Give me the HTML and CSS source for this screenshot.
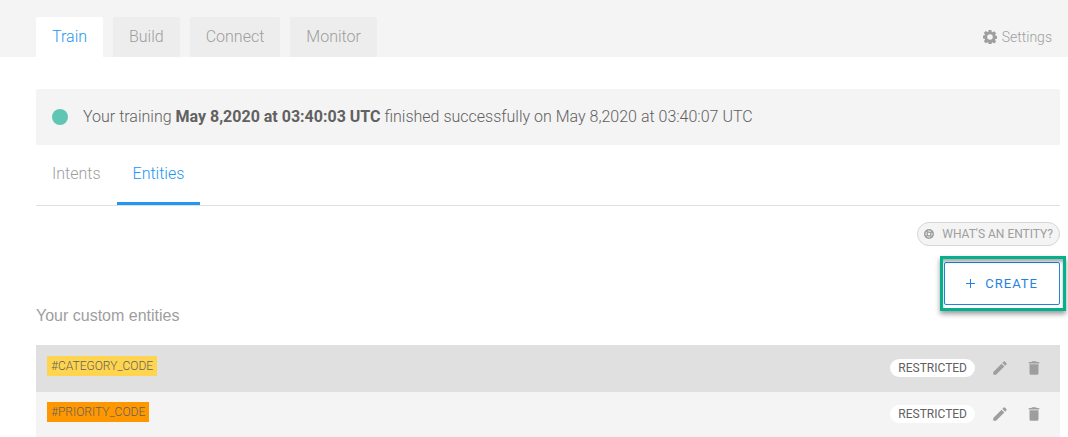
FILE: index.html
```html
<!DOCTYPE html>
<html lang="en">
<head>
<meta charset="utf-8">
<meta name="viewport" content="width=device-width, initial-scale=1">
<title>Entities</title>
<link rel="stylesheet" href="styles.css">
</head>
<body>
<svg class="sprite" aria-hidden="true">
  <symbol id="gear" viewBox="0 0 24 24"><path fill-rule="evenodd" d="M9.600 0h4.800l.6 3.400 1.400.6 2.800-2 3.400 3.400-2 2.800.6 1.400 3.400.6v4.800l-3.400.6-.6 1.400 2 2.800-3.400 3.400-2.800-2-1.400.6-.6 3.400H9.600L9 21.400l-1.400-.6-2.800 2-3.400-3.400 2-2.800-.6-1.400L0 14.600V9.800l2.800-.6.6-1.400-2-2.800 3.400-3.400 2.800 2L9 3.400zM12 7.200a4.800 4.800 0 1 0 0 9.600 4.800 4.800 0 0 0 0-9.600z"/></symbol>
  <symbol id="pencil" viewBox="0 0 24 24"><path d="M3 17.250V21h3.750L17.810 9.940l-3.750-3.750L3 17.250zM20.710 7.040a1 1 0 0 0 0-1.410l-2.340-2.340a1 1 0 0 0-1.410 0l-1.830 1.830 3.750 3.750 1.830-1.830z"/></symbol>
  <symbol id="trash" viewBox="0 0 24 24"><path d="M6 19c0 1.100.9 2 2 2h8c1.100 0 2-.9 2-2V7H6v12zM19 4h-3.500l-1-1h-5l-1 1H5v2h14V4z"/></symbol>
  <symbol id="ring" viewBox="0 0 24 24"><circle cx="12" cy="12" r="12" fill="currentColor"/><circle cx="12" cy="12" r="7.200" fill="none" stroke="#f4f4f4" stroke-width="2.400" stroke-dasharray="7.800 3.510" stroke-dashoffset="3.900"/><circle cx="12" cy="12" r="3" fill="#f4f4f4"/></symbol>
</svg>

<header class="topbar">
  <nav class="tabs" aria-label="Sections">
    <a class="tab tab-active" href="#train" aria-current="page">Train</a>
    <a class="tab" href="#build">Build</a>
    <a class="tab" href="#connect">Connect</a>
    <a class="tab" href="#monitor">Monitor</a>
  </nav>
  <a class="settings" href="#settings"><svg class="icon-gear"><use href="#gear"/></svg>Settings</a>
</header>

<main class="content">
  <p class="status"><span class="status-dot"></span><span>Your training <strong>May 8,2020 at 03:40:03 UTC</strong> finished successfully on May 8,2020 at 03:40:07 UTC</span></p>

  <nav class="subtabs" aria-label="Training">
    <a class="subtab" href="#intents">Intents</a>
    <a class="subtab subtab-active" href="#entities" aria-current="page">Entities</a>
  </nav>

  <div class="actions">
    <button class="help" type="button"><svg class="icon-ring"><use href="#ring"/></svg>WHAT'S AN ENTITY?</button>
    <div class="create-wrap">
      <button class="create" type="button"><svg class="icon-plus" viewBox="0 0 9 9"><path d="M4 0h1v4h4v1H5v4H4V5H0V4h4z"/></svg>CREATE</button>
      <span class="highlight"></span>
    </div>
  </div>

  <h2 class="heading">Your custom entities</h2>

  <ul class="entities">
    <li class="entity entity-hover">
      <span class="tag tag-yellow">#CATEGORY_CODE</span>
      <span class="badge">RESTRICTED</span>
      <button class="icon-button" type="button" aria-label="Edit"><svg class="icon"><use href="#pencil"/></svg></button>
      <button class="icon-button" type="button" aria-label="Delete"><svg class="icon"><use href="#trash"/></svg></button>
    </li>
    <li class="entity">
      <span class="tag tag-orange">#PRIORITY_CODE</span>
      <span class="badge">RESTRICTED</span>
      <button class="icon-button" type="button" aria-label="Edit"><svg class="icon"><use href="#pencil"/></svg></button>
      <button class="icon-button" type="button" aria-label="Delete"><svg class="icon"><use href="#trash"/></svg></button>
    </li>
  </ul>
</main>
</body>
</html>
```
FILE: styles.css
```css
* {
  box-sizing: border-box;
}

body {
  margin: 0;
  background: #fff;
  color: #616161;
  font-family: Roboto, "Liberation Sans", sans-serif;
  font-size: 16px;
  font-weight: 300;
  line-height: 24px;
}

a {
  text-decoration: none;
}

button {
  font-family: inherit;
  cursor: pointer;
}

svg {
  fill: currentColor;
  flex: none;
}

.sprite {
  display: none;
}

.topbar {
  display: flex;
  justify-content: space-between;
  align-items: flex-start;
  padding: 17px 16px 0 36px;
  background: #f4f4f4;
}

.tabs {
  display: flex;
  gap: 10px;
}

.tab {
  padding: 8px 16px;
  border-radius: 2px 2px 0 0;
  background: #ededed;
  color: #9e9e9e;
}

.tab-active {
  background: #fff;
  color: #2196f3;
}

.settings {
  display: flex;
  align-items: center;
  gap: 5px;
  padding: 8px 0;
  color: #9e9e9e;
  font-size: 14px;
}

.icon-gear {
  width: 14px;
  height: 14px;
}

.content {
  padding: 32px 8px 0 36px;
}

.status {
  display: flex;
  align-items: center;
  gap: 15px;
  margin: 0;
  padding: 16px;
  border-radius: 2px;
  background: #f4f4f4;
}

.status-dot {
  width: 16px;
  height: 16px;
  border-radius: 50%;
  background: #5fc6b4;
}

.status strong {
  font-weight: 700;
}

.subtabs {
  display: flex;
  border-bottom: 1px solid #e0e0e0;
}

.subtab {
  padding: 17px 16px 16px;
  border-bottom: 3px solid transparent;
  color: #9e9e9e;
}

.subtab-active {
  border-color: #2196f3;
  color: #2196f3;
}

.actions {
  display: flex;
  flex-direction: column;
  align-items: flex-end;
  gap: 16px;
  padding-top: 16px;
}

.help {
  display: flex;
  align-items: center;
  gap: 8px;
  padding: 0 6px;
  border: 1px solid #d6d6d6;
  border-radius: 12px;
  background: #f4f4f4;
  color: #9e9e9e;
  font-size: 12px;
  font-weight: 400;
  line-height: 22px;
}

.icon-ring {
  width: 10px;
  height: 10px;
}

.create-wrap {
  position: relative;
}

.create {
  display: flex;
  align-items: center;
  gap: 10px;
  padding: 0 21px;
  border: 1px solid #2583e0;
  border-radius: 2px;
  background: #fff;
  color: #2583e0;
  font-size: 13px;
  font-weight: 400;
  letter-spacing: 1px;
  line-height: 41px;
}

.icon-plus {
  width: 9px;
  height: 9px;
}

.highlight {
  position: absolute;
  inset: -6px -6px -6px -4px;
  border: 3px solid #05b08c;
  box-shadow: 0 3px 5px rgba(0, 0, 0, 0.4), inset 0 3px 3px rgba(0, 0, 0, 0.3);
  pointer-events: none;
}

.heading {
  margin: 0 0 18px;
  color: #9e9e9e;
  font-family: "Liberation Sans", Arial, sans-serif;
  font-size: 16px;
  font-weight: 400;
  line-height: 22px;
}

.entities {
  margin: 0;
  padding: 0;
  list-style: none;
}

.entity {
  display: flex;
  align-items: center;
  padding: 10px 9px 11px 11px;
  border-top: 1px solid #e0e0e0;
  background: #f4f4f4;
}

.entity-hover {
  background: #e0e0e0;
}

.tag {
  align-self: flex-start;
  margin-right: auto;
  padding: 0 4px;
  font-size: 12px;
  line-height: 20px;
}

.tag-yellow {
  background: #ffd54f;
}

.tag-orange {
  background: #ff9800;
}

.badge {
  margin-right: 8px;
  padding: 0 8px;
  border-radius: 9px;
  background: #fff;
  font-size: 12px;
  font-weight: 400;
  line-height: 18px;
}

.icon-button {
  display: flex;
  padding: 3px 8px;
  border: 0;
  background: none;
  color: #9e9e9e;
}

.icon {
  width: 18px;
  height: 18px;
}
```
